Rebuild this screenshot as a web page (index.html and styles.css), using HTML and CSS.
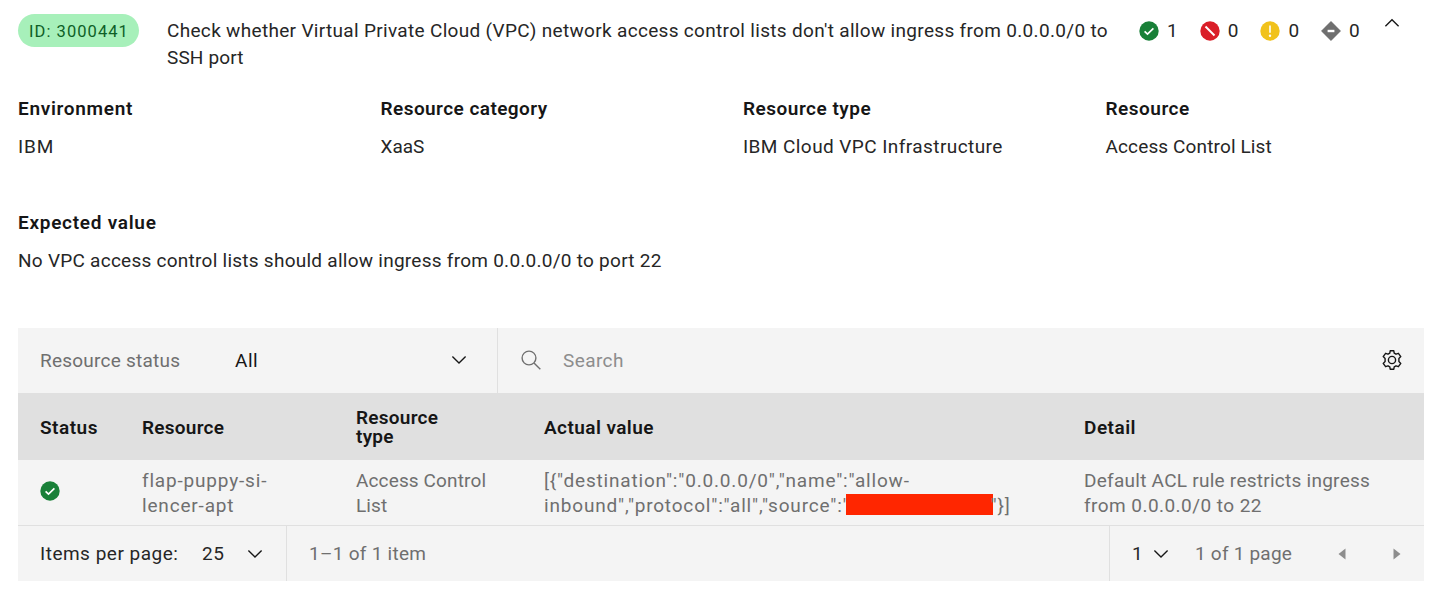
FILE: index.html
```html
<!DOCTYPE html>
<html lang="en">
<head>
<meta charset="utf-8">
<title>Control assessment</title>
<link rel="stylesheet" href="styles.css">
</head>
<body>
<svg class="sprite" aria-hidden="true">
  <symbol id="check" viewBox="0 0 20 20"><circle cx="10" cy="10" r="9.7" fill="#198038"/><path d="M5.6 10.3 8.5 13.1 14.4 7.3" fill="none" stroke="#fff" stroke-width="1.7"/></symbol>
  <symbol id="down" viewBox="0 0 16 10"><path d="M1.4 1.5 8 8.1 14.6 1.5" fill="none" stroke="#161616" stroke-width="1.35"/></symbol>
</svg>
<main class="page">
  <header class="summary">
    <span class="tag"><span class="tag-text">ID: 3000441</span></span>
    <h1 class="title"><span class="title-first">Check whether Virtual Private Cloud (VPC) network access control lists don't allow ingress from 0.0.0.0/0 to</span><br><span class="title-last">SSH port</span></h1>
    <div class="counts">
      <span class="count"><svg class="status"><use href="#check"/></svg>1</span>
      <span class="count"><svg class="status" viewBox="0 0 20 20"><circle cx="10" cy="10" r="9.7" fill="#da1e28"/><path d="M5.5 5.5 14.5 14.5" stroke="#fff" stroke-width="2"/></svg>0</span>
      <span class="count"><svg class="status" viewBox="0 0 20 20"><circle cx="10" cy="10" r="9.7" fill="#f1c21b"/><path d="M10 4.6V11.8" stroke="#fff" stroke-width="1.6"/><circle cx="10" cy="14.8" r="1.2" fill="#fff"/></svg>0</span>
      <span class="count"><svg class="status" viewBox="0 0 20 20"><path d="M10 .3 19.7 10 10 19.7.3 10Z" fill="#6f6f6f" stroke="#6f6f6f" stroke-width=".4" stroke-linejoin="round"/><path d="M6.6 10H13.4" stroke="#fff" stroke-width="2.4"/></svg>0</span>
    </div>
    <svg class="collapse" viewBox="0 0 16 10"><path d="M1.4 8.3 8 1.7 14.6 8.3" fill="none" stroke="#161616" stroke-width="1.35"/></svg>
  </header>
  <section class="facts">
    <div><h2 class="f1">Environment</h2><p class="v1">IBM</p></div>
    <div><h2 class="f2">Resource category</h2><p class="v2">XaaS</p></div>
    <div><h2 class="f3">Resource type</h2><p class="v3">IBM Cloud VPC Infrastructure</p></div>
    <div><h2 class="f4">Resource</h2><p class="v4">Access Control List</p></div>
  </section>
  <section class="expected"><h2>Expected value</h2><p>No VPC access control lists should allow ingress from 0.0.0.0/0 to port 22</p></section>
  <section class="panel">
    <div class="toolbar">
      <div class="filter"><span class="filter-label">Resource status</span><span class="filter-value">All</span><svg class="chevron"><use href="#down"/></svg></div>
      <div class="search"><svg class="search-icon" viewBox="0 0 20 20"><circle cx="8" cy="8" r="6.9" fill="none" stroke="#6f6f6f" stroke-width="1.4"/><path d="M13 13 19.3 19.3" stroke="#6f6f6f" stroke-width="1.4"/></svg><span class="search-text">Search</span>
        <svg class="gear" viewBox="0 0 20 20" fill="none" stroke="#161616" stroke-width="1.4" stroke-linejoin="round"><path d="M8.2.8H11.8L12.2 3.2 14 4.2 16.4 3.3 18.8 6.6 16.9 8.4V11.6L18.8 13.4 16.4 16.7 14 15.8 12.2 16.8 11.8 19.2H8.2L7.8 16.8 6 15.8 3.6 16.7 1.2 13.4 3.1 11.6V8.4L1.2 6.6 3.6 3.3 6 4.2 7.8 3.2Z"/><circle cx="10" cy="10" r="3.6"/></svg>
      </div>
    </div>
    <div class="row head"><span>Status</span><span class="h-resource">Resource</span><span class="h-resource">Resource<br>type</span><span class="h-actual">Actual value</span><span>Detail</span></div>
    <div class="row data">
      <span class="cell-status"><svg class="status"><use href="#check"/></svg></span>
      <span class="d2">flap-puppy-si-<br>lencer-apt</span>
      <span class="d3">Access Control<br>List</span>
      <span class="d4">[{"destination":"0.0.0.0/0","name":"allow-<br>inbound","protocol":"all","source":"<i class="redacted"></i>"}]</span>
      <span class="d5">Default ACL rule restricts ingress<br><span class="d5b">from 0.0.0.0/0 to 22</span></span>
    </div>
    <footer class="pagination">
      <div class="per-page"><span class="per-label">Items per page:</span><span class="per-value">25</span><svg class="chevron"><use href="#down"/></svg></div>
      <div class="range"><span>1–1 of 1 item</span></div>
      <div class="pager"><span class="page-number">1</span><svg class="chevron"><use href="#down"/></svg><span class="page-total">1 of 1 page</span><svg class="arrow prev" viewBox="0 0 8 12"><path d="M7.5 .5V11.5L.5 6Z"/></svg><svg class="arrow" viewBox="0 0 8 12"><path d="M.5 .5V11.5L7.5 6Z"/></svg></div>
    </footer>
  </section>
</main>
</body>
</html>
```
FILE: styles.css
```css
* { box-sizing: border-box; }
body { margin: 0; background: #fff; color: #262626; font-family: Roboto, "Liberation Sans", sans-serif; font-size: 19px; letter-spacing: .5px; }
h1, h2, p { margin: 0; font-size: inherit; font-weight: 400; }
h2, .head { font-weight: 600; color: #161616; }
svg { display: block; flex: none; }
span { white-space: nowrap; }
.sprite { display: none; }
.page { width: 1430px; height: 595px; padding: 14px 6px 0 18px; overflow: hidden; }
.summary { display: flex; height: 83px; }
.tag { flex: none; width: 121px; height: 33px; border-radius: 17px; background: #a7f0ba; color: #0e6027; font-size: 16.5px; line-height: 35px; padding-left: 11px; letter-spacing: 1.05px; }
.title { flex: none; width: 973px; padding: 3px 0 0 28px; line-height: 27px; }
.title-first { letter-spacing: .32px; }
.title-last { letter-spacing: .15px; }
.counts { display: flex; flex: none; margin-left: 27px; height: 33px; }
.count { display: flex; width: 60.7px; align-items: center; gap: 8px; }
.status { width: 20px; height: 20px; }
.collapse { width: 16px; height: 10px; margin: 4px 0 0 2px; }
.facts { display: grid; grid-template-columns: repeat(4, 362.5px); height: 114px; line-height: 24px; }
.facts p, .expected p { margin-top: 14px; }
.f1 { letter-spacing: .7px; }
.f2 { letter-spacing: .44px; }
.v1 { letter-spacing: .9px; }
.v2 { letter-spacing: 0; }
.v3 { letter-spacing: .43px; }
.v4 { letter-spacing: .13px; }
.expected { line-height: 24px; height: 116.5px; }
.expected h2 { letter-spacing: .72px; }
.expected p { letter-spacing: .26px; }
.panel { width: 1406px; background: #f4f4f4; }
.toolbar { display: flex; height: 65.5px; }
.chevron { width: 16px; height: 10px; }
.filter { display: flex; width: 480px; padding: 0 30px 0 22px; align-items: center; border-right: 1px solid #e0e0e0; color: #161616; }
.filter-label { width: 195px; color: #6f6f6f; letter-spacing: .23px; }
.filter .chevron { margin-left: auto; }
.search { display: flex; flex: 1; padding: 0 22px 0 23px; align-items: center; color: #8d8d8d; }
.search-icon { width: 20px; height: 20px; margin-right: 22px; }
.search-text { letter-spacing: .4px; }
.gear { width: 20px; height: 20px; margin-left: auto; }
.row { display: grid; grid-template-columns: 102px 214px 188px 540px 1fr; padding-left: 22px; align-items: center; height: 66.5px; }
.head { background: #e0e0e0; line-height: 19px; padding-top: 2px; }
.h-resource { letter-spacing: .25px; }
.h-actual { letter-spacing: .42px; }
.data { color: #6f6f6f; line-height: 24.6px; border-bottom: 1px solid #e0e0e0; padding-top: 3px; }
.cell-status { margin-top: -6px; }
.redacted { display: inline-block; width: 147px; height: 21px; margin: 0 -2px 0 -4px; vertical-align: -3px; background: #ff2600; }
.d2 { letter-spacing: .82px; }
.d3 { letter-spacing: .13px; }
.d4 { height: 49px; letter-spacing: .82px; }
.d5 { letter-spacing: .26px; }
.d5b { letter-spacing: .45px; }
.pagination { display: flex; width: 1405px; height: 55px; }
.pagination > div { display: flex; align-items: center; }
.pagination .per-page { width: 269px; padding-left: 22px; border-right: 1px solid #e0e0e0; }
.per-label { width: 162px; }
.per-value { width: 45px; }
.range { flex: 1; padding-left: 22px; color: #6f6f6f; letter-spacing: .28px; }
.pager { width: 314px; padding-left: 22px; border-left: 1px solid #e0e0e0; color: #6f6f6f; }
.page-number { width: 21px; color: #262626; }
.page-total { width: 142.5px; margin-left: 26px; letter-spacing: .22px; }
.arrow { width: 8px; height: 12px; fill: #8d8d8d; }
.prev { margin-right: 47.5px; }
```
